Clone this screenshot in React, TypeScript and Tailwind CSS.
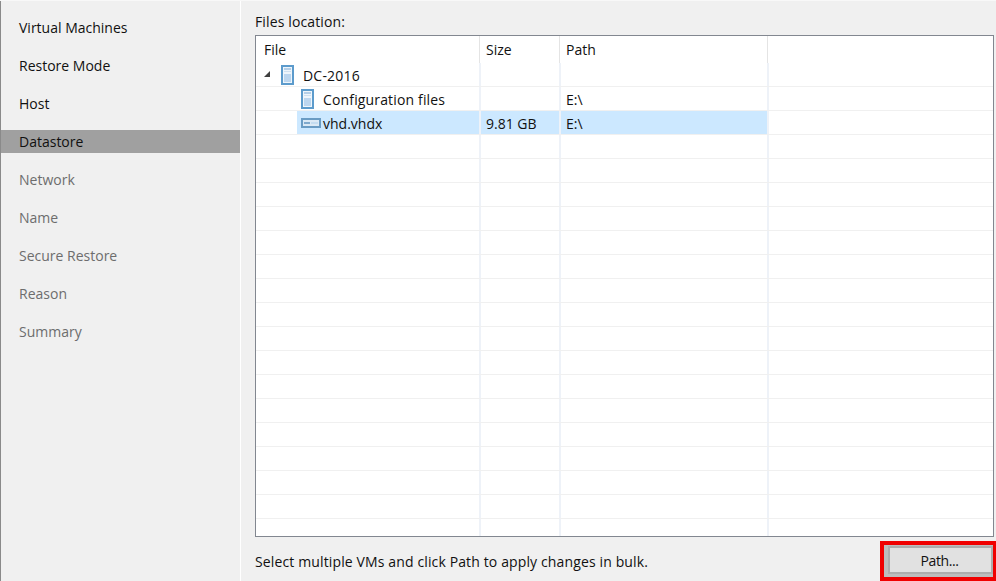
import React from "react";

const steps = [
  { name: "Virtual Machines", done: true },
  { name: "Restore Mode", done: true },
  { name: "Host", done: true },
  { name: "Datastore", done: true, active: true },
  { name: "Network" },
  { name: "Name" },
  { name: "Secure Restore" },
  { name: "Reason" },
  { name: "Summary" },
];

const ServerIcon = () => (
  <svg width="13" height="20" viewBox="0 0 13 20" className="shrink-0">
    <rect x="1" y="1" width="11" height="18" fill="#eef5fb" stroke="#5c9bcc" strokeWidth="2" />
    <rect x="3" y="3" width="7" height="2" fill="#b4cfe8" />
    <rect x="3" y="6" width="7" height="1" fill="#cfe0f0" />
    <rect x="3" y="9" width="7" height="8" fill="#bcd6ef" />
  </svg>
);

const DiskIcon = () => (
  <svg width="20" height="10" viewBox="0 0 20 10" className="shrink-0">
    <rect x="1" y="1" width="18" height="8" fill="#dbe9f5" stroke="#6a9cc4" strokeWidth="2" />
    <rect x="3" y="4" width="6" height="2" fill="#7fa9cc" />
    <rect x="10" y="4" width="7" height="2" fill="#c4dcf0" />
  </svg>
);

const Row = ({ file, size, path, selected }: { file?: React.ReactNode; size?: string; path?: string; selected?: boolean }) => (
  <div className="flex h-6 shrink-0 border-b border-[#f0f0f0]">
    <div className="flex w-[225px] shrink-0 border-r-2 border-[#eef2f8]">{file}</div>
    <div className={`flex w-20 shrink-0 items-center border-r-2 border-[#eef2f8] pt-px pl-[5px] ${selected ? "bg-[#cce8ff]" : ""}`}>{size}</div>
    <div className={`flex w-[208px] shrink-0 items-center border-r-2 border-[#eef2f8] pt-px pl-[5px] ${selected ? "bg-[#cce8ff]" : ""}`}>{path}</div>
  </div>
);

export default function App() {
  return (
    <div className="flex h-[581px] w-[996px] overflow-hidden border-t border-[#f8f8f8] bg-[#f0f0f0] text-[14px] text-[#111111] [font-family:'Open_Sans','Liberation_Sans',sans-serif]">
      <aside className="flex w-[241px] shrink-0 flex-col border-r border-l border-white border-l-[#8a8a8a] pt-[15px]">
        {steps.map((s) => (
          <div
            key={s.name}
            className={`mb-[15px] flex h-[23px] items-center pl-[18px] ${s.active ? "bg-[#a0a0a0]" : ""} ${s.done ? "" : "text-[#6d6d6d]"}`}
          >
            {s.name}
          </div>
        ))}
      </aside>

      <main className="flex min-w-0 flex-1 flex-col pt-[10px] pr-[2px] pl-[14px]">
        <div className="h-6 leading-[21px] tracking-[0.13px]">Files location:</div>
        <div className="flex h-[502px] flex-col overflow-hidden border border-[#828790] bg-white">
          <div className="flex h-[27px] shrink-0">
            <div className="mr-px flex w-[224px] items-center border-r border-[#e4e4e4] pl-2">File</div>
            <div className="mr-px flex w-[79px] items-center border-r border-[#e4e4e4] pl-[5px]">Size</div>
            <div className="mr-px flex w-[207px] items-center border-r border-[#e4e4e4] pl-[5px]">Path</div>
          </div>
          <Row
            file={
              <div className="flex items-center pl-[8px]">
                <svg width="6" height="6" viewBox="0 0 6 6" className="mb-[2px] shrink-0">
                  <path d="M6 0V6H0Z" fill="#404040" />
                </svg>
                <span className="mr-[9px] ml-[11px]"><ServerIcon /></span>
                <span className="pt-px tracking-[0.2px]">DC-2016</span>
              </div>
            }
          />
          <Row
            file={
              <div className="flex items-center pl-[45px]">
                <span className="mr-[9px]"><ServerIcon /></span>
                <span className="pt-px tracking-[0.15px]">Configuration files</span>
              </div>
            }
            path="E:\"
          />
          <Row
            selected
            file={
              <div className="ml-[41px] flex flex-1 items-center bg-[#cce8ff] pl-[4px]">
                <DiskIcon />
                <span className="ml-[2px] pt-px">vhd.vhdx</span>
              </div>
            }
            size="9.81 GB"
            path="E:\"
          />
          {Array.from({ length: 16 }).map((_, i) => (
            <Row key={i} />
          ))}
          <div className="flex flex-1">
            <div className="w-[225px] border-r-2 border-[#eef2f8]" />
            <div className="w-20 border-r-2 border-[#eef2f8]" />
            <div className="w-[208px] border-r-2 border-[#eef2f8]" />
          </div>
        </div>
        <div className="flex flex-1 items-center justify-between pt-1">
          <span className="tracking-[0.13px]">Select multiple VMs and click Path to apply changes in bulk.</span>
          <div className="-mr-[2px] border-y-4 border-r-[3px] border-l-4 border-[#f00000] bg-[#bdbdbd] pt-px pb-[3px] pl-1">
            <button className="flex h-7 w-[105px] items-center justify-center border-2 border-[#adadad] bg-[#e1e1e1] pr-[2px] tracking-[-0.4px]">
              Path...
            </button>
          </div>
        </div>
      </main>
    </div>
  );
}
